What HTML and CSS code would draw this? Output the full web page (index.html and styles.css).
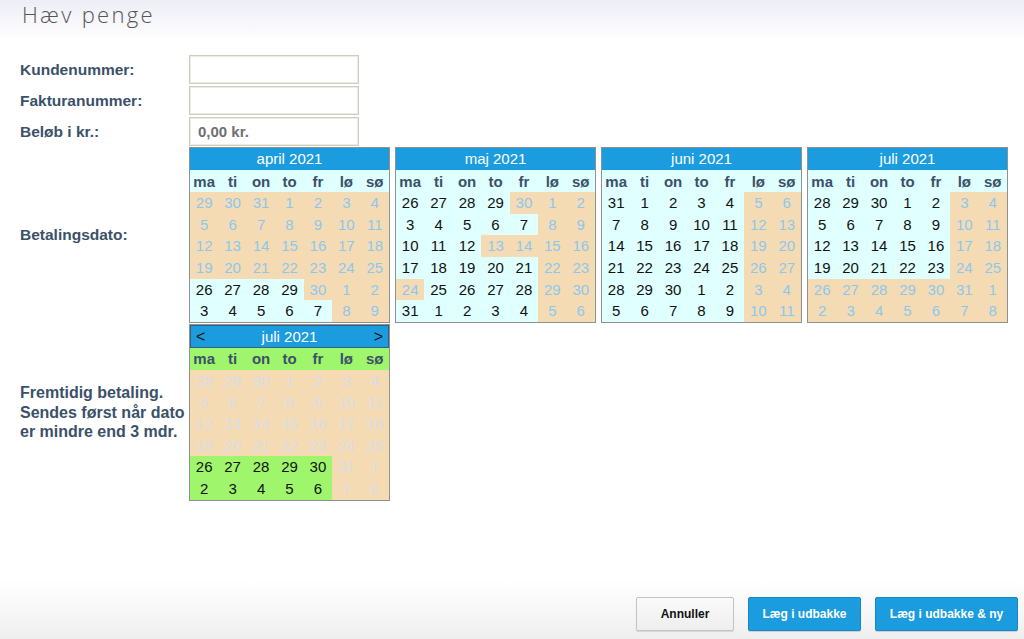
FILE: index.html
```html
<!DOCTYPE html>
<html lang="da">
<head>
<meta charset="utf-8">
<title>Hæv penge</title>
<link rel="stylesheet" href="styles.css">
</head>
<body>
<header class="topbar"><h1 class="title">Hæv penge</h1></header>

<main class="form">
  <label class="lbl row-input">Kundenummer:</label>
  <div class="field row-input"><input class="inp" type="text"></div>

  <label class="lbl row-input">Fakturanummer:</label>
  <div class="field row-input"><input class="inp" type="text"></div>

  <label class="lbl row-input">Beløb i kr.:</label>
  <div class="field row-input"><input class="inp" type="text" placeholder="0,00 kr."></div>

  <label class="lbl">Betalingsdato:</label>
  <div class="cals">
    <div class="cal">
      <div class="cal-head">april 2021</div>
      <div class="dow"><span>ma</span><span>ti</span><span>on</span><span>to</span><span>fr</span><span>lø</span><span>sø</span></div>
      <div class="days">
        <span class="x">29</span><span class="x">30</span><span class="x">31</span><span class="x">1</span><span class="x">2</span><span class="x">3</span><span class="x">4</span>
        <span class="x">5</span><span class="x">6</span><span class="x">7</span><span class="x">8</span><span class="x">9</span><span class="x">10</span><span class="x">11</span>
        <span class="x">12</span><span class="x">13</span><span class="x">14</span><span class="x">15</span><span class="x">16</span><span class="x">17</span><span class="x">18</span>
        <span class="x">19</span><span class="x">20</span><span class="x">21</span><span class="x">22</span><span class="x">23</span><span class="x">24</span><span class="x">25</span>
        <span class="d">26</span><span class="d">27</span><span class="d">28</span><span class="d">29</span><span class="x">30</span><span class="x">1</span><span class="x">2</span>
        <span class="d">3</span><span class="d">4</span><span class="d">5</span><span class="d">6</span><span class="d">7</span><span class="x">8</span><span class="x">9</span>
      </div>
    </div>
    <div class="cal">
      <div class="cal-head">maj 2021</div>
      <div class="dow"><span>ma</span><span>ti</span><span>on</span><span>to</span><span>fr</span><span>lø</span><span>sø</span></div>
      <div class="days">
        <span class="d">26</span><span class="d">27</span><span class="d">28</span><span class="d">29</span><span class="x">30</span><span class="x">1</span><span class="x">2</span>
        <span class="d">3</span><span class="d">4</span><span class="d">5</span><span class="d">6</span><span class="d">7</span><span class="x">8</span><span class="x">9</span>
        <span class="d">10</span><span class="d">11</span><span class="d">12</span><span class="x">13</span><span class="x">14</span><span class="x">15</span><span class="x">16</span>
        <span class="d">17</span><span class="d">18</span><span class="d">19</span><span class="d">20</span><span class="d">21</span><span class="x">22</span><span class="x">23</span>
        <span class="x">24</span><span class="d">25</span><span class="d">26</span><span class="d">27</span><span class="d">28</span><span class="x">29</span><span class="x">30</span>
        <span class="d">31</span><span class="d">1</span><span class="d">2</span><span class="d">3</span><span class="d">4</span><span class="x">5</span><span class="x">6</span>
      </div>
    </div>
    <div class="cal">
      <div class="cal-head">juni 2021</div>
      <div class="dow"><span>ma</span><span>ti</span><span>on</span><span>to</span><span>fr</span><span>lø</span><span>sø</span></div>
      <div class="days">
        <span class="d">31</span><span class="d">1</span><span class="d">2</span><span class="d">3</span><span class="d">4</span><span class="x">5</span><span class="x">6</span>
        <span class="d">7</span><span class="d">8</span><span class="d">9</span><span class="d">10</span><span class="d">11</span><span class="x">12</span><span class="x">13</span>
        <span class="d">14</span><span class="d">15</span><span class="d">16</span><span class="d">17</span><span class="d">18</span><span class="x">19</span><span class="x">20</span>
        <span class="d">21</span><span class="d">22</span><span class="d">23</span><span class="d">24</span><span class="d">25</span><span class="x">26</span><span class="x">27</span>
        <span class="d">28</span><span class="d">29</span><span class="d">30</span><span class="d">1</span><span class="d">2</span><span class="x">3</span><span class="x">4</span>
        <span class="d">5</span><span class="d">6</span><span class="d">7</span><span class="d">8</span><span class="d">9</span><span class="x">10</span><span class="x">11</span>
      </div>
    </div>
    <div class="cal">
      <div class="cal-head">juli 2021</div>
      <div class="dow"><span>ma</span><span>ti</span><span>on</span><span>to</span><span>fr</span><span>lø</span><span>sø</span></div>
      <div class="days">
        <span class="d">28</span><span class="d">29</span><span class="d">30</span><span class="d">1</span><span class="d">2</span><span class="x">3</span><span class="x">4</span>
        <span class="d">5</span><span class="d">6</span><span class="d">7</span><span class="d">8</span><span class="d">9</span><span class="x">10</span><span class="x">11</span>
        <span class="d">12</span><span class="d">13</span><span class="d">14</span><span class="d">15</span><span class="d">16</span><span class="x">17</span><span class="x">18</span>
        <span class="d">19</span><span class="d">20</span><span class="d">21</span><span class="d">22</span><span class="d">23</span><span class="x">24</span><span class="x">25</span>
        <span class="x">26</span><span class="x">27</span><span class="x">28</span><span class="x">29</span><span class="x">30</span><span class="x">31</span><span class="x">1</span>
        <span class="x">2</span><span class="x">3</span><span class="x">4</span><span class="x">5</span><span class="x">6</span><span class="x">7</span><span class="x">8</span>
      </div>
    </div>
  </div>

  <label class="lbl lbl-multi">Fremtidig betaling.<br>Sendes først når dato<br>er mindre end 3 mdr.</label>
  <div class="cals">
    <div class="cal cal-future">
      <div class="cal-head"><span class="nav">&lt;</span><span>juli 2021</span><span class="nav">&gt;</span></div>
      <div class="dow"><span>ma</span><span>ti</span><span>on</span><span>to</span><span>fr</span><span>lø</span><span>sø</span></div>
      <div class="days">
        <span class="y">28</span><span class="y">29</span><span class="y">30</span><span class="y">1</span><span class="y">2</span><span class="y">3</span><span class="y">4</span>
        <span class="y">5</span><span class="y">6</span><span class="y">7</span><span class="y">8</span><span class="y">9</span><span class="y">10</span><span class="y">11</span>
        <span class="y">12</span><span class="y">13</span><span class="y">14</span><span class="y">15</span><span class="y">16</span><span class="y">17</span><span class="y">18</span>
        <span class="y">19</span><span class="y">20</span><span class="y">21</span><span class="y">22</span><span class="y">23</span><span class="y">24</span><span class="y">25</span>
        <span class="g">26</span><span class="g">27</span><span class="g">28</span><span class="g">29</span><span class="g">30</span><span class="y">31</span><span class="y">1</span>
        <span class="g">2</span><span class="g">3</span><span class="g">4</span><span class="g">5</span><span class="g">6</span><span class="y">7</span><span class="y">8</span>
      </div>
    </div>
  </div>
</main>

<footer class="footer">
  <button class="btn btn-plain" type="button">Annuller</button>
  <button class="btn btn-blue btn-w1" type="button">Læg i udbakke</button>
  <button class="btn btn-blue btn-w2" type="button">Læg i udbakke &amp; ny</button>
</footer>
</body>
</html>
```

FILE: styles.css
```css
* { box-sizing: border-box; }

html, body {
  margin: 0;
  padding: 0;
}

body {
  height: 639px;
  overflow: hidden;
  display: flex;
  flex-direction: column;
  background: #ffffff;
  font-family: "Liberation Sans", Arial, Helvetica, sans-serif;
  color: #3b5169;
}

.topbar {
  height: 40px;
  background: linear-gradient(to bottom, #ededf7 0%, #f6f6fb 50%, #ffffff 100%);
  padding-left: 22px;
}

.title {
  margin: 0;
  font-family: "Open Sans", Lato, sans-serif;
  font-weight: 300;
  font-size: 22px;
  line-height: 29px;
  color: #555555;
  letter-spacing: 2.3px;
}

.form {
  margin-top: 14px;
  padding-left: 20px;
  display: grid;
  grid-template-columns: 169px auto;
  align-items: center;
}

.lbl {
  font-weight: bold;
  font-size: 15.5px;
  color: #3b5169;
}

.lbl-multi {
  font-size: 16px;
  line-height: 19.5px;
}

.row-input {
  height: 31px;
}

.lbl.row-input {
  display: flex;
  align-items: center;
}

.field {
  display: flex;
  align-items: center;
}

.inp {
  width: 170px;
  height: 29px;
  margin: 0;
  border: 1px solid #cdcdc2;
  box-shadow: inset 0 0 0 1px #ececE4;
  background: #ffffff;
  padding: 0 8px;
  font-family: "Liberation Sans", Arial, sans-serif;
  font-size: 15px;
  font-weight: bold;
  color: #333;
}

.inp::placeholder {
  color: #707070;
  opacity: 1;
}

.cals {
  display: flex;
  gap: 5px;
  padding: 0 0 1px 0;
}

.cal {
  width: 201px;
  border: 1px solid #909090;
  background: #e0ffff;
}

.cal-head {
  height: 22px;
  background: #1b9cdf;
  color: #ffffff;
  font-size: 15px;
  line-height: 22px;
  text-align: center;
}

.dow {
  height: 22px;
  display: grid;
  grid-template-columns: repeat(7, 1fr);
  background: #e0ffff;
}

.dow span {
  text-align: center;
  font-weight: bold;
  font-size: 15px;
  line-height: 23px;
  color: #3b5169;
}

.days {
  display: grid;
  grid-template-columns: repeat(7, 1fr);
  grid-auto-rows: 21.67px;
}

.days span {
  text-align: center;
  font-size: 15px;
  line-height: 21.67px;
}

.d {
  background: #e0ffff;
  color: #111111;
}

.x {
  background: #f4dbb4;
  color: #8cc8ee;
}

/* future-payment picker */
.cal-future .cal-head {
  display: flex;
  justify-content: space-between;
  padding: 0 5px;
  border: 1px solid #2d6287;
  height: 23px;
  line-height: 21px;
}

.nav {
  color: #111111;
  font-size: 16px;
}

.cal-future .dow {
  background: #9ff66c;
}

.cal-future .dow span {
  line-height: 22px;
}

.cal-future .days span {
  line-height: 21.6px;
}

.cal-future .days {
  grid-auto-rows: 21.6px;
}

.g {
  background: #9ff66c;
  color: #111111;
}

.y {
  background: #f4dbb4;
  color: #d9dde6;
}

.footer {
  margin-top: auto;
  height: 60px;
  background: linear-gradient(to bottom, #ffffff 0%, #f6f6f6 60%, #eeeeee 100%);
  display: flex;
  justify-content: flex-end;
  align-items: flex-end;
  gap: 14px;
  padding: 0 6px 8px 0;
}

.btn {
  height: 34px;
  border-radius: 2px;
  font-family: "Liberation Sans", Arial, sans-serif;
  font-weight: bold;
  font-size: 12px;
  cursor: pointer;
  padding: 0;
}

.btn-plain {
  width: 98px;
  background: linear-gradient(to bottom, #fafafa, #eeeeee);
  border: 1px solid #c4c4c4;
  color: #111111;
  box-shadow: 0 1px 1px rgba(0,0,0,0.12);
}

.btn-blue {
  background: #1b9cdf;
  border: 1px solid #1687c4;
  color: #ffffff;
  box-shadow: 0 1px 1px rgba(0,0,0,0.15);
}

.btn-w1 { width: 113px; }
.btn-w2 { width: 143px; }
```
